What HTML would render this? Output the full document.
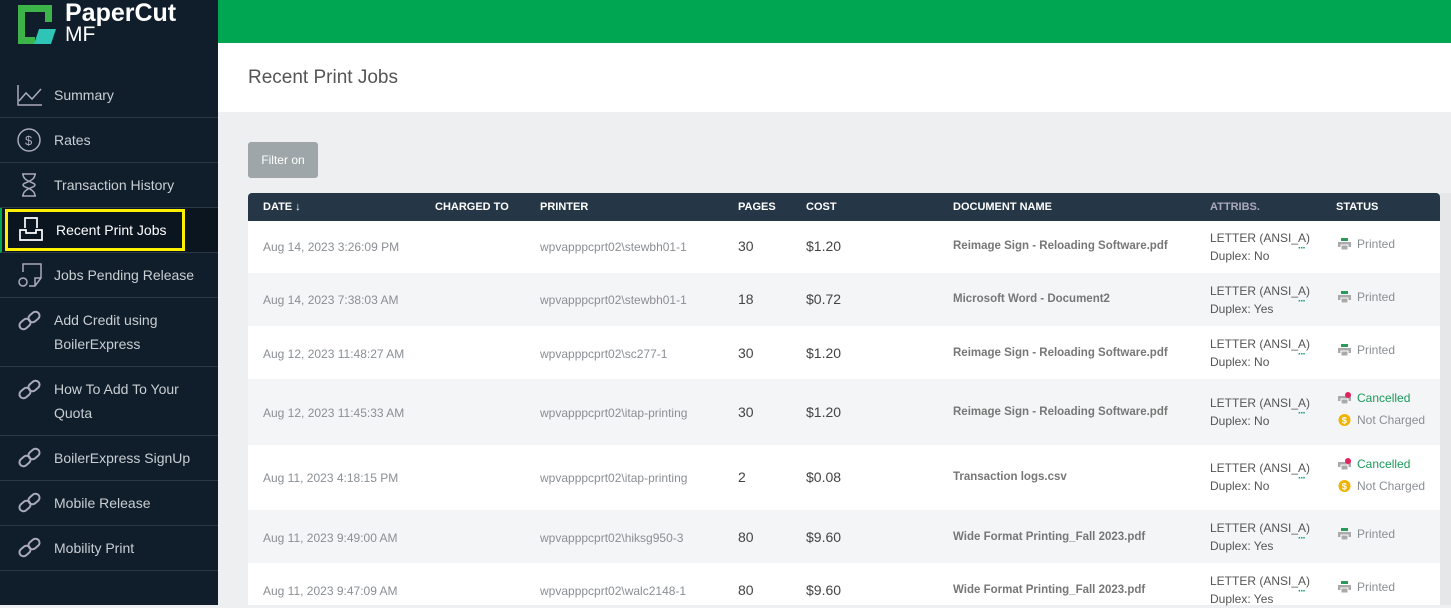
<!DOCTYPE html>
<html><head><meta charset="utf-8"><style>
*{box-sizing:border-box;margin:0;padding:0}
body{width:1451px;height:605px;overflow:hidden;font-family:"Liberation Sans",sans-serif;background:#eeeff0;position:relative}
#sb{position:absolute;left:0;top:0;width:218px;height:605px;background:#101d2b}
.it{position:absolute;left:0;width:218px;border-bottom:1px solid #2a3846;color:#c9ced3;font-size:14px;line-height:24px}
.it .t{position:absolute;left:54px}
.it svg{position:absolute;left:17px}
#top{position:absolute;left:218px;top:0;right:0;height:43px;background:#00a651}
#hd{position:absolute;left:218px;top:43px;right:0;height:69px;background:#fff}
#hd h1{position:absolute;left:30px;top:24px;font-weight:normal;font-size:19px;color:#555}
#btn{position:absolute;left:248px;top:142px;width:70px;height:36px;background:#9ea6a9;border-radius:3px;color:#fff;font-size:12px;line-height:36px;text-align:center}
#th{position:absolute;left:248px;top:193px;width:1192px;height:28px;background:#253646;border-radius:4px 4px 0 0;color:#fff;font-size:11px;font-weight:bold}
#th span{position:absolute;top:8px}
.r{position:absolute;left:248px;width:1192px;background:#fff;font-size:12px;color:#8a8f94}
.r.g{background:#f4f5f6}
.r span{position:absolute}
.c1{left:15px}.c3{left:292px}.c4{left:490px;color:#444;font-size:14px}.c5{left:558px;color:#444;font-size:14px}.c6{left:705px;font-weight:bold;color:#777;font-size:11.5px}
.a{left:962px;color:#555;line-height:18px}
.d{left:1050px;color:#0a9a7a;font-weight:bold;font-size:10px;letter-spacing:-1px}
.s{left:1090px;line-height:22px}
.pr{display:inline-block;width:13px;height:12px;vertical-align:-2px;margin-right:6px}
#scr{position:absolute;left:1440px;top:193px;width:11px;height:412px;background:#e6e7e8}
</style></head><body>
<div id="sb">
<svg style="position:absolute;left:17px;top:3px" width="40" height="42" viewBox="0 0 40 42"><path d="M1 2h34v17h-7V9H8v25h10v7H1z" fill="#3cb44a"/><path d="M17 41l5-15h17l-5 15z" fill="#2ec4b6"/></svg>
<div style="position:absolute;left:65px;top:0;color:#fff;font-size:25px;font-weight:bold;line-height:26px">PaperCut</div>
<div style="position:absolute;left:65px;top:24px;color:#fff;font-size:21px;line-height:22px">MF</div>
<div class="it" style="top:72px;height:46px"><svg width="26" height="24" style="top:11px" fill="none" stroke="#aab" stroke-width="1.5"><path d="M1 2v20h24M2 18l7-8 6 6 9-10"/></svg><span class="t" style="top:11px">Summary</span></div>
<div class="it" style="top:118px;height:45px"><svg width="26" height="26" style="top:9px" fill="none" stroke="#aab" stroke-width="1.5"><circle cx="12" cy="13" r="11"/><text x="8" y="18" font-size="13" fill="#aab" stroke="none">$</text></svg><span class="t" style="top:10px">Rates</span></div>
<div class="it" style="top:163px;height:45px"><svg width="26" height="26" style="top:9px" fill="none" stroke="#aab" stroke-width="1.5"><path d="M5 2h14M5 24h14M6 2c0 8 12 8 12 11s-12 3-12 11M18 2c0 8-12 8-12 11s12 3 12 11"/></svg><span class="t" style="top:10px">Transaction History</span></div>
<div class="it" style="top:208px;height:45px;background:#0b1520;border-left:2px solid #00a651"><div style="position:absolute;left:3px;top:1px;width:180px;height:42px;border:3px solid #ffef00"></div><svg width="26" height="26" style="top:8px" fill="none" stroke="#fff" stroke-width="1.7"><path d="M6 12V2h12v10M1 14h6v3h10v-3h6v10H1z"/></svg><span class="t" style="top:10px;color:#fff">Recent Print Jobs</span></div>
<div class="it" style="top:253px;height:45px"><svg width="26" height="26" style="top:9px" fill="none" stroke="#aab" stroke-width="1.5"><path d="M6 10V2h18v14l-6 8h-6M18 24v-8h6"/><circle cx="6" cy="20" r="4"/></svg><span class="t" style="top:10px">Jobs Pending Release</span></div>
<div class="it" style="top:298px;height:69px"><svg width="26" height="26" style="top:10px" fill="none" stroke="#aab" stroke-width="2"><rect x="2" y="12" width="12" height="8" rx="4" transform="rotate(-40 8 16)"/><rect x="11" y="5" width="12" height="8" rx="4" transform="rotate(-40 17 9)"/></svg><span class="t" style="top:10px">Add Credit using<br>BoilerExpress</span></div>
<div class="it" style="top:367px;height:69px"><svg width="26" height="26" style="top:10px" fill="none" stroke="#aab" stroke-width="2"><rect x="2" y="12" width="12" height="8" rx="4" transform="rotate(-40 8 16)"/><rect x="11" y="5" width="12" height="8" rx="4" transform="rotate(-40 17 9)"/></svg><span class="t" style="top:10px">How To Add To Your<br>Quota</span></div>
<div class="it" style="top:436px;height:45px"><svg width="26" height="26" style="top:9px" fill="none" stroke="#aab" stroke-width="2"><rect x="2" y="12" width="12" height="8" rx="4" transform="rotate(-40 8 16)"/><rect x="11" y="5" width="12" height="8" rx="4" transform="rotate(-40 17 9)"/></svg><span class="t" style="top:10px">BoilerExpress SignUp</span></div>
<div class="it" style="top:481px;height:45px"><svg width="26" height="26" style="top:9px" fill="none" stroke="#aab" stroke-width="2"><rect x="2" y="12" width="12" height="8" rx="4" transform="rotate(-40 8 16)"/><rect x="11" y="5" width="12" height="8" rx="4" transform="rotate(-40 17 9)"/></svg><span class="t" style="top:10px">Mobile Release</span></div>
<div class="it" style="top:526px;height:45px"><svg width="26" height="26" style="top:9px" fill="none" stroke="#aab" stroke-width="2"><rect x="2" y="12" width="12" height="8" rx="4" transform="rotate(-40 8 16)"/><rect x="11" y="5" width="12" height="8" rx="4" transform="rotate(-40 17 9)"/></svg><span class="t" style="top:10px">Mobility Print</span></div>
</div>
<div id="top"></div>
<div id="hd"><h1>Recent Print Jobs</h1></div>
<div id="btn">Filter on</div>
<div id="th"><span style="left:15px">DATE &#8595;</span><span style="left:187px">CHARGED TO</span><span style="left:292px">PRINTER</span><span style="left:490px">PAGES</span><span style="left:558px">COST</span><span style="left:705px">DOCUMENT NAME</span><span style="left:962px;color:#aab">ATTRIBS.</span><span style="left:1088px">STATUS</span></div>
<div id="scr"></div>

<div class="r" style="top:221px;height:52px"><span class="c1" style="top:19px">Aug 14, 2023 3:26:09 PM</span><span class="c3" style="top:19px">wpvapppcprt02\stewbh01-1</span><span class="c4" style="top:17px">30</span><span class="c5" style="top:17px">$1.20</span><span class="c6" style="top:19px">Reimage Sign - Reloading Software.pdf</span><span class="a" style="top:8px">LETTER (ANSI_A)<br>Duplex: No</span><span class="d" style="top:22px">···</span><span class="s" style="top:12px"><svg class="pr" viewBox="0 0 13 12"><rect x="3" y="0" width="7" height="3" fill="#2a9a5a"/><rect x="0" y="4" width="13" height="5" fill="#aaa"/><rect x="3" y="7" width="7" height="5" fill="#aaa" stroke="#fff"/></svg>Printed</span></div>
<div class="r g" style="top:273px;height:53px"><span class="c1" style="top:20px">Aug 14, 2023 7:38:03 AM</span><span class="c3" style="top:20px">wpvapppcprt02\stewbh01-1</span><span class="c4" style="top:18px">18</span><span class="c5" style="top:18px">$0.72</span><span class="c6" style="top:20px">Microsoft Word - Document2</span><span class="a" style="top:9px">LETTER (ANSI_A)<br>Duplex: Yes</span><span class="d" style="top:23px">···</span><span class="s" style="top:13px"><svg class="pr" viewBox="0 0 13 12"><rect x="3" y="0" width="7" height="3" fill="#2a9a5a"/><rect x="0" y="4" width="13" height="5" fill="#aaa"/><rect x="3" y="7" width="7" height="5" fill="#aaa" stroke="#fff"/></svg>Printed</span></div>
<div class="r" style="top:326px;height:53px"><span class="c1" style="top:21px">Aug 12, 2023 11:48:27 AM</span><span class="c3" style="top:21px">wpvapppcprt02\sc277-1</span><span class="c4" style="top:19px">30</span><span class="c5" style="top:19px">$1.20</span><span class="c6" style="top:21px">Reimage Sign - Reloading Software.pdf</span><span class="a" style="top:9px">LETTER (ANSI_A)<br>Duplex: No</span><span class="d" style="top:23px">···</span><span class="s" style="top:13px"><svg class="pr" viewBox="0 0 13 12"><rect x="3" y="0" width="7" height="3" fill="#2a9a5a"/><rect x="0" y="4" width="13" height="5" fill="#aaa"/><rect x="3" y="7" width="7" height="5" fill="#aaa" stroke="#fff"/></svg>Printed</span></div>
<div class="r g" style="top:379px;height:66px"><span class="c1" style="top:27px">Aug 12, 2023 11:45:33 AM</span><span class="c3" style="top:27px">wpvapppcprt02\itap-printing</span><span class="c4" style="top:25px">30</span><span class="c5" style="top:25px">$1.20</span><span class="c6" style="top:27px">Reimage Sign - Reloading Software.pdf</span><span class="a" style="top:15px">LETTER (ANSI_A)<br>Duplex: No</span><span class="d" style="top:29px">···</span><span class="s" style="top:8px"><span style="position:relative;color:#1a9a5a"><svg class="pr" viewBox="0 0 13 12"><rect x="0" y="4" width="13" height="5" fill="#aaa"/><rect x="3" y="7" width="7" height="5" fill="#aaa" stroke="#fff"/><circle cx="10" cy="3" r="3" fill="#e0245e"/></svg>Cancelled</span><br><span style="position:relative"><svg class="pr" viewBox="0 0 13 13"><circle cx="6.5" cy="6.5" r="6.5" fill="#f0b400"/><text x="3.5" y="10.5" font-size="10" fill="#fff" font-weight="bold">$</text></svg>Not Charged</span></span></div>
<div class="r" style="top:445px;height:65px"><span class="c1" style="top:26px">Aug 11, 2023 4:18:15 PM</span><span class="c3" style="top:26px">wpvapppcprt02\itap-printing</span><span class="c4" style="top:24px">2</span><span class="c5" style="top:24px">$0.08</span><span class="c6" style="top:26px">Transaction logs.csv</span><span class="a" style="top:14px">LETTER (ANSI_A)<br>Duplex: No</span><span class="d" style="top:28px">···</span><span class="s" style="top:8px"><span style="position:relative;color:#1a9a5a"><svg class="pr" viewBox="0 0 13 12"><rect x="0" y="4" width="13" height="5" fill="#aaa"/><rect x="3" y="7" width="7" height="5" fill="#aaa" stroke="#fff"/><circle cx="10" cy="3" r="3" fill="#e0245e"/></svg>Cancelled</span><br><span style="position:relative"><svg class="pr" viewBox="0 0 13 13"><circle cx="6.5" cy="6.5" r="6.5" fill="#f0b400"/><text x="3.5" y="10.5" font-size="10" fill="#fff" font-weight="bold">$</text></svg>Not Charged</span></span></div>
<div class="r g" style="top:510px;height:53px"><span class="c1" style="top:21px">Aug 11, 2023 9:49:00 AM</span><span class="c3" style="top:21px">wpvapppcprt02\hiksg950-3</span><span class="c4" style="top:19px">80</span><span class="c5" style="top:19px">$9.60</span><span class="c6" style="top:21px">Wide Format Printing_Fall 2023.pdf</span><span class="a" style="top:9px">LETTER (ANSI_A)<br>Duplex: Yes</span><span class="d" style="top:23px">···</span><span class="s" style="top:13px"><svg class="pr" viewBox="0 0 13 12"><rect x="3" y="0" width="7" height="3" fill="#2a9a5a"/><rect x="0" y="4" width="13" height="5" fill="#aaa"/><rect x="3" y="7" width="7" height="5" fill="#aaa" stroke="#fff"/></svg>Printed</span></div>
<div class="r" style="top:563px;height:42px"><span class="c1" style="top:21px">Aug 11, 2023 9:47:09 AM</span><span class="c3" style="top:21px">wpvapppcprt02\walc2148-1</span><span class="c4" style="top:19px">80</span><span class="c5" style="top:19px">$9.60</span><span class="c6" style="top:21px">Wide Format Printing_Fall 2023.pdf</span><span class="a" style="top:9px">LETTER (ANSI_A)<br>Duplex: Yes</span><span class="d" style="top:23px">···</span><span class="s" style="top:13px"><svg class="pr" viewBox="0 0 13 12"><rect x="3" y="0" width="7" height="3" fill="#2a9a5a"/><rect x="0" y="4" width="13" height="5" fill="#aaa"/><rect x="3" y="7" width="7" height="5" fill="#aaa" stroke="#fff"/></svg>Printed</span></div>
</body></html>
